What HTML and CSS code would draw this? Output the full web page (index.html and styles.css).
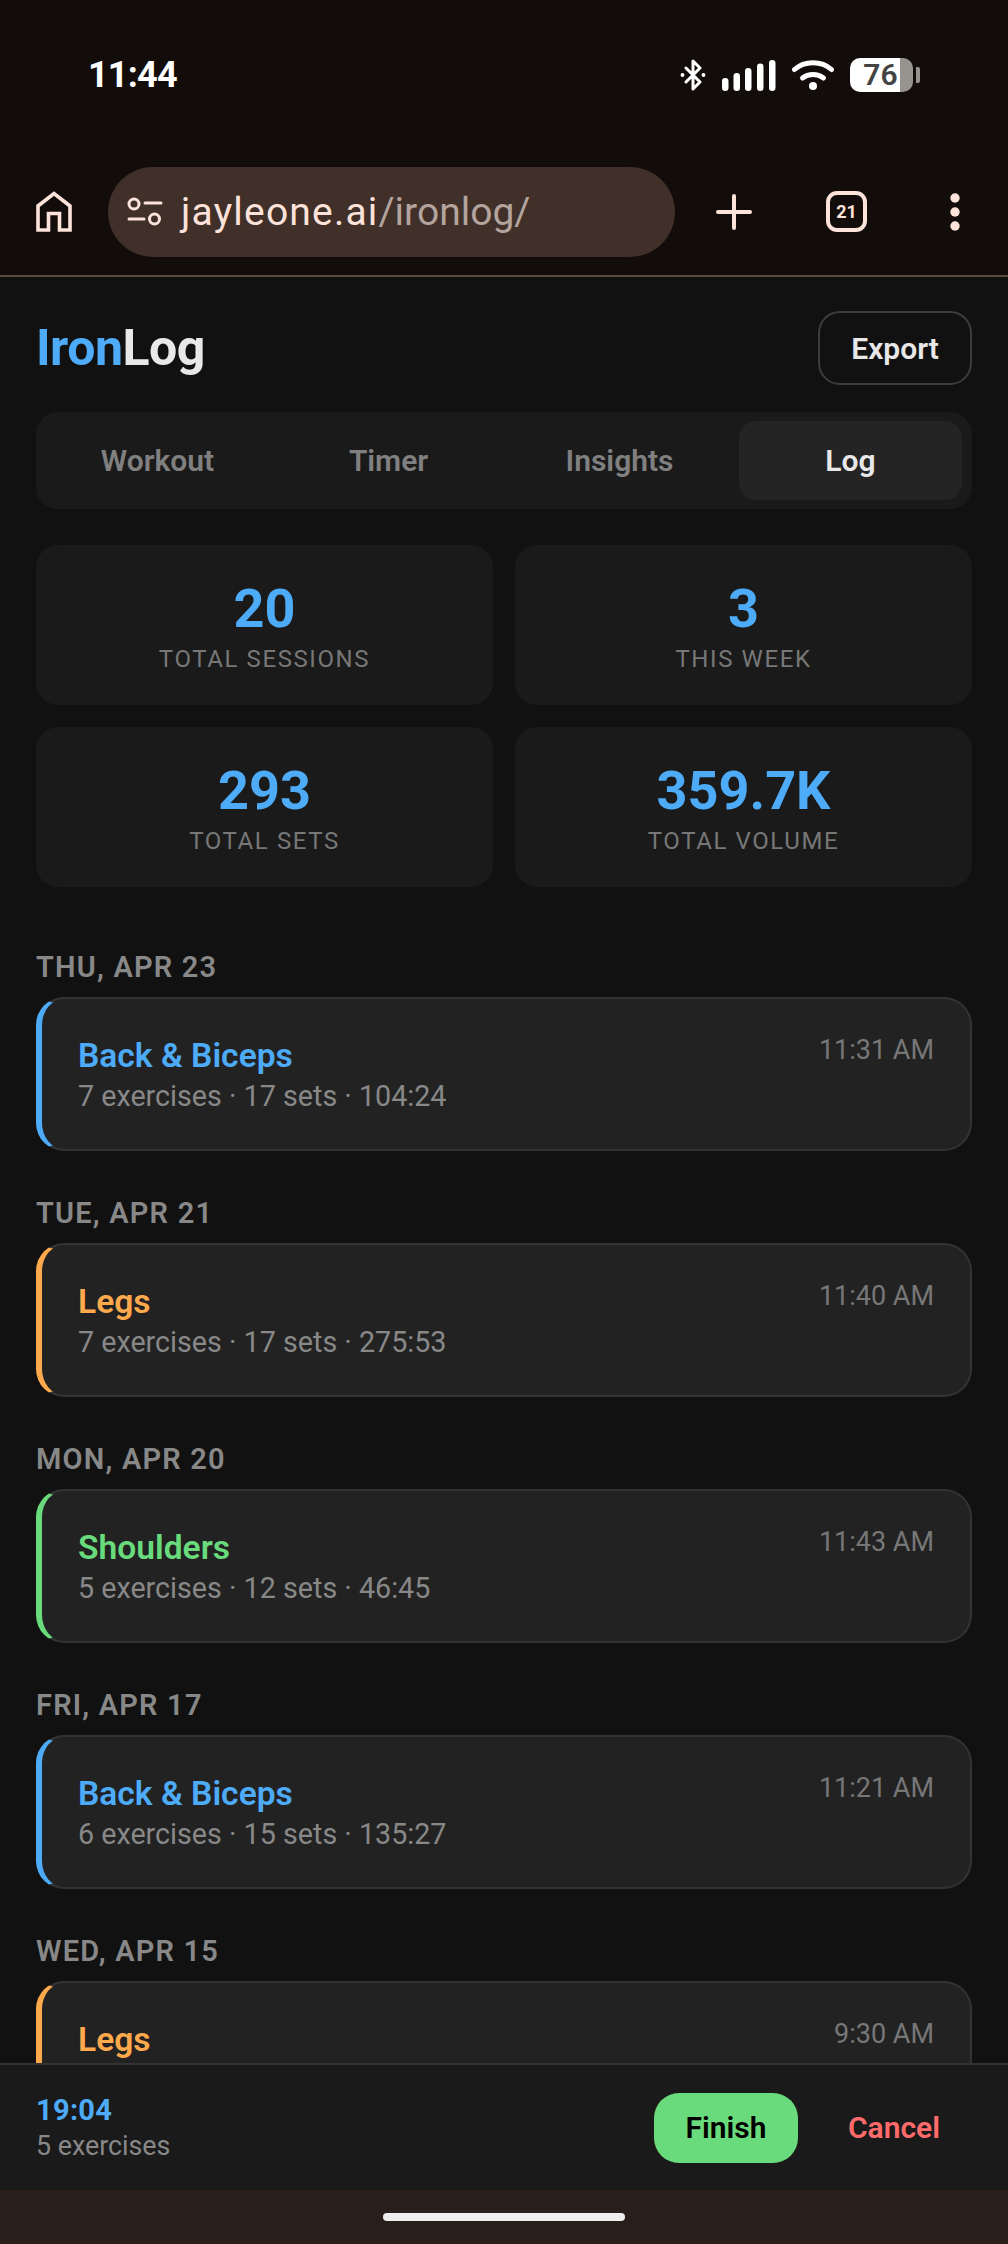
FILE: index.html
```html
<!DOCTYPE html>
<html lang="en">
<head>
    <meta charset="UTF-8">
    <meta name="viewport" content="width=device-width, initial-scale=1.0">
    <title>IronLog</title>
    <link rel="stylesheet" href="styles.css">
</head>
<body>
    <div class="status-bar">
        <span class="clock">11:44</span>
        <div class="status-icons">
            <svg class="ic-bt" width="26" height="32" viewBox="0 0 26 32" fill="none" stroke="#fff" stroke-width="3" stroke-linejoin="round" stroke-linecap="round">
                <path d="M6 9l14 14-7 7V2l7 7L6 23"/>
                <circle cx="2.5" cy="16" r="1.2" fill="#fff" stroke-width="1.5"/>
                <circle cx="23.5" cy="16" r="1.2" fill="#fff" stroke-width="1.5"/>
            </svg>
            <svg class="ic-signal" width="54" height="32" viewBox="0 0 54 32" fill="#fff">
                <rect x="0" y="19" width="6.5" height="13" rx="3.2"/>
                <rect x="11.5" y="14" width="6.5" height="18" rx="3.2"/>
                <rect x="23" y="9" width="6.5" height="23" rx="3.2"/>
                <rect x="35" y="4.5" width="6.5" height="27.5" rx="3.2"/>
                <rect x="47" y="1" width="6.5" height="31" rx="3.2"/>
            </svg>
            <svg class="ic-wifi" width="42" height="32" viewBox="0 0 42 32" fill="none" stroke="#fff" stroke-width="5" stroke-linecap="round">
                <path d="M2.5 10.5C12.5 1.5 29.5 1.5 39.5 10.5"/>
                <path d="M10.5 19c6-4.8 15-4.8 21 0"/>
                <circle cx="21" cy="27" r="4" fill="#fff" stroke="none"/>
            </svg>
            <div class="battery">
                <div class="battery-body">76</div>
                <div class="battery-nub"></div>
            </div>
        </div>
    </div>

    <div class="toolbar">
        <svg class="ic-home" width="36" height="41" viewBox="0 0 36 41" fill="none" stroke="#fde3da" stroke-width="3.6">
            <path d="M2 39V15L18 2.5 34 15v24H23.5V22.5h-11V39z"/>
        </svg>
        <div class="url-pill">
            <svg width="36" height="30" viewBox="0 0 36 30" fill="none" stroke="#fde3da" stroke-width="3" stroke-linecap="round">
                <circle cx="7" cy="7" r="5"/>
                <path d="M18 6h16"/>
                <circle cx="27.5" cy="22" r="5"/>
                <path d="M2 22h15"/>
            </svg>
            <span class="url"><span class="url-host">jayleone.ai</span><span class="url-path">/ironlog/</span></span>
        </div>
        <svg class="ic-plus" width="36" height="36" viewBox="0 0 36 36" stroke="#fde3da" stroke-width="4" stroke-linecap="round">
            <path d="M18 2v32M2 18h32"/>
        </svg>
        <div class="tab-count">21</div>
        <svg class="ic-menu" width="10" height="38" viewBox="0 0 10 38" fill="#fde3da">
            <circle cx="5" cy="5" r="4.7"/>
            <circle cx="5" cy="19" r="4.7"/>
            <circle cx="5" cy="33" r="4.7"/>
        </svg>
    </div>

    <main class="app">
        <header class="app-header">
            <h1 class="logo"><span class="logo-accent">Iron</span>Log</h1>
            <button class="export-btn">Export</button>
        </header>

        <nav class="tabs">
            <div class="tab">Workout</div>
            <div class="tab">Timer</div>
            <div class="tab">Insights</div>
            <div class="tab active">Log</div>
        </nav>

        <section class="stats">
            <div class="stat"><div class="stat-value">20</div><div class="stat-label">TOTAL SESSIONS</div></div>
            <div class="stat"><div class="stat-value">3</div><div class="stat-label">THIS WEEK</div></div>
            <div class="stat"><div class="stat-value">293</div><div class="stat-label">TOTAL SETS</div></div>
            <div class="stat"><div class="stat-value">359.7K</div><div class="stat-label">TOTAL VOLUME</div></div>
        </section>

        <section class="day">
            <div class="day-label">THU, APR 23</div>
            <div class="session back">
                <div>
                    <div class="session-name">Back &amp; Biceps</div>
                    <div class="session-meta">7 exercises · 17 sets · 104:24</div>
                </div>
                <div class="session-time">11:31 AM</div>
            </div>
        </section>
        <section class="day">
            <div class="day-label">TUE, APR 21</div>
            <div class="session legs">
                <div>
                    <div class="session-name">Legs</div>
                    <div class="session-meta">7 exercises · 17 sets · 275:53</div>
                </div>
                <div class="session-time">11:40 AM</div>
            </div>
        </section>
        <section class="day">
            <div class="day-label">MON, APR 20</div>
            <div class="session shoulders">
                <div>
                    <div class="session-name">Shoulders</div>
                    <div class="session-meta">5 exercises · 12 sets · 46:45</div>
                </div>
                <div class="session-time">11:43 AM</div>
            </div>
        </section>
        <section class="day">
            <div class="day-label">FRI, APR 17</div>
            <div class="session back">
                <div>
                    <div class="session-name">Back &amp; Biceps</div>
                    <div class="session-meta">6 exercises · 15 sets · 135:27</div>
                </div>
                <div class="session-time">11:21 AM</div>
            </div>
        </section>
        <section class="day">
            <div class="day-label">WED, APR 15</div>
            <div class="session legs">
                <div>
                    <div class="session-name">Legs</div>
                </div>
                <div class="session-time">9:30 AM</div>
            </div>
        </section>
    </main>

    <footer class="workout-bar">
        <div>
            <div class="bar-timer">19:04</div>
            <div class="bar-count">5 exercises</div>
        </div>
        <div class="bar-actions">
            <button class="finish-btn">Finish</button>
            <button class="cancel-btn">Cancel</button>
        </div>
    </footer>

    <div class="nav-bar"><div class="home-pill"></div></div>
</body>
</html>
```

FILE: styles.css
```css
* {
    box-sizing: border-box;
}
html, body {
    margin: 0;
    padding: 0;
}
body {
    width: 1008px;
    height: 2244px;
    display: flex;
    flex-direction: column;
    overflow: hidden;
    background: #111;
    color: #e8e8e8;
    font-family: Roboto, "Liberation Sans", sans-serif;
}
button {
    font-family: inherit;
    cursor: pointer;
}

/* phone + browser chrome */
.status-bar {
    height: 150px;
    flex: none;
    display: flex;
    justify-content: space-between;
    align-items: flex-start;
    padding: 54px 88px 0;
    background: #120d0a;
    color: #fff;
}
.clock {
    font-size: 36px;
    font-weight: 700;
    line-height: 42px;
    letter-spacing: -0.8px;
}
.status-icons {
    display: flex;
    align-items: center;
    gap: 16px;
    margin-top: 4px;
}
.battery {
    display: flex;
    align-items: center;
    gap: 3px;
}
.battery-body {
    width: 63px;
    height: 34px;
    border-radius: 10px;
    background: linear-gradient(90deg, #fff 0 50px, #97938f 50px);
    color: #444;
    font-size: 30px;
    font-weight: 600;
    line-height: 34px;
    text-align: center;
    padding-right: 2px;
}
.battery-nub {
    width: 4px;
    height: 16px;
    border-radius: 0 2px 2px 0;
    background: #97938f;
}
.toolbar {
    height: 127px;
    flex: none;
    display: flex;
    align-items: center;
    padding: 0 0 2px 36px;
    background: #120d0a;
    border-bottom: 2px solid #5a4a40;
}
.url-pill {
    width: 567px;
    height: 90px;
    margin-left: 36px;
    display: flex;
    align-items: center;
    gap: 18px;
    padding-left: 19px;
    border-radius: 45px;
    background: #412f29;
}
.url {
    font-size: 39px;
}
.url-host {
    color: #fde3da;
    letter-spacing: 1.2px;
}
.url-path {
    color: #b3a49d;
}
.ic-plus {
    margin-left: 41px;
}
.tab-count {
    width: 41px;
    height: 41px;
    margin-left: 74px;
    border: 4px solid #fde3da;
    border-radius: 11px;
    color: #fde3da;
    font-size: 18px;
    font-weight: 700;
    line-height: 33px;
    text-align: center;
}
.ic-menu {
    margin-left: 83px;
}

/* app */
.app {
    flex: 1;
    min-height: 0;
    overflow: hidden;
    padding: 34px 36px 0;
}
.app-header {
    display: flex;
    justify-content: space-between;
    align-items: center;
    height: 74px;
}
.logo {
    margin: 0;
    font-size: 50px;
    font-weight: 700;
    letter-spacing: -0.5px;
    color: #e8e8e8;
}
.logo-accent {
    color: #4dabf7;
}
.export-btn {
    width: 154px;
    height: 74px;
    border: 2px solid #3d3d3d;
    border-radius: 22px;
    background: transparent;
    color: #e8e8e8;
    font-size: 30px;
    font-weight: 600;
}
.tabs {
    display: flex;
    height: 97px;
    margin-top: 27px;
    padding: 9px 10px;
    gap: 8px;
    border-radius: 22px;
    background: #1a1a1a;
}
.tab {
    flex: 1;
    display: flex;
    align-items: center;
    justify-content: center;
    border-radius: 17px;
    color: #808080;
    font-size: 30px;
    font-weight: 600;
}
.tab.active {
    background: #242424;
    color: #e8e8e8;
}
.stats {
    display: grid;
    grid-template-columns: 1fr 1fr;
    gap: 22px;
    margin-top: 36px;
}
.stat {
    height: 160px;
    padding-top: 36px;
    border-radius: 22px;
    background: #1a1a1a;
    text-align: center;
}
.stat-value {
    font-size: 54px;
    font-weight: 700;
    line-height: 56px;
    color: #4dabf7;
}
.stat-label {
    margin-top: 7px;
    font-size: 24px;
    line-height: 30px;
    letter-spacing: 1.6px;
    color: #777;
}
.day {
    margin-top: 47px;
}
.stats + .day {
    margin-top: 65px;
}
.day-label {
    height: 30px;
    margin-bottom: 15px;
    font-size: 29px;
    font-weight: 600;
    line-height: 30px;
    letter-spacing: 1.2px;
    color: #888;
}
.session {
    display: flex;
    justify-content: space-between;
    align-items: flex-start;
    height: 154px;
    padding: 37px 36px 0 36px;
    background: #222;
    border: 2px solid #333;
    border-left: 6px solid #4dabf7;
    border-radius: 28px;
}
.session.back {
    border-left-color: #4dabf7;
}
.session.legs {
    border-left-color: #ffa94d;
}
.session.shoulders {
    border-left-color: #69db7c;
}
.session-name {
    font-size: 33.6px;
    font-weight: 600;
    line-height: 40px;
}
.back .session-name {
    color: #4dabf7;
}
.legs .session-name {
    color: #ffa94d;
}
.shoulders .session-name {
    color: #69db7c;
}
.session-meta {
    font-size: 28.7px;
    line-height: 40px;
    color: #888;
}
.session-time {
    margin-top: -4px;
    font-size: 27px;
    line-height: 36px;
    color: #777;
}

/* bottom */
.workout-bar {
    height: 127px;
    flex: none;
    display: flex;
    justify-content: space-between;
    align-items: center;
    padding: 0 36px;
    background: #1a1a1a;
    border-top: 2px solid #333;
}
.bar-timer {
    font-size: 29px;
    font-weight: 700;
    line-height: 36px;
    letter-spacing: 0.3px;
    color: #4dabf7;
}
.bar-count {
    font-size: 26.8px;
    line-height: 36px;
    color: #888;
}
.bar-actions {
    display: flex;
    align-items: center;
    gap: 18px;
}
.finish-btn {
    width: 144px;
    height: 70px;
    border: none;
    border-radius: 25px;
    background: #69db7c;
    color: #000;
    font-size: 30px;
    font-weight: 600;
}
.cancel-btn {
    padding: 0 32px;
    height: 70px;
    border: none;
    background: transparent;
    color: #ff6b6b;
    font-size: 30px;
    font-weight: 600;
}
.nav-bar {
    height: 54px;
    flex: none;
    display: flex;
    justify-content: center;
    padding-top: 23px;
    background: #2a1e1a;
}
.home-pill {
    width: 242px;
    height: 8px;
    border-radius: 4px;
    background: #eee;
}
```
